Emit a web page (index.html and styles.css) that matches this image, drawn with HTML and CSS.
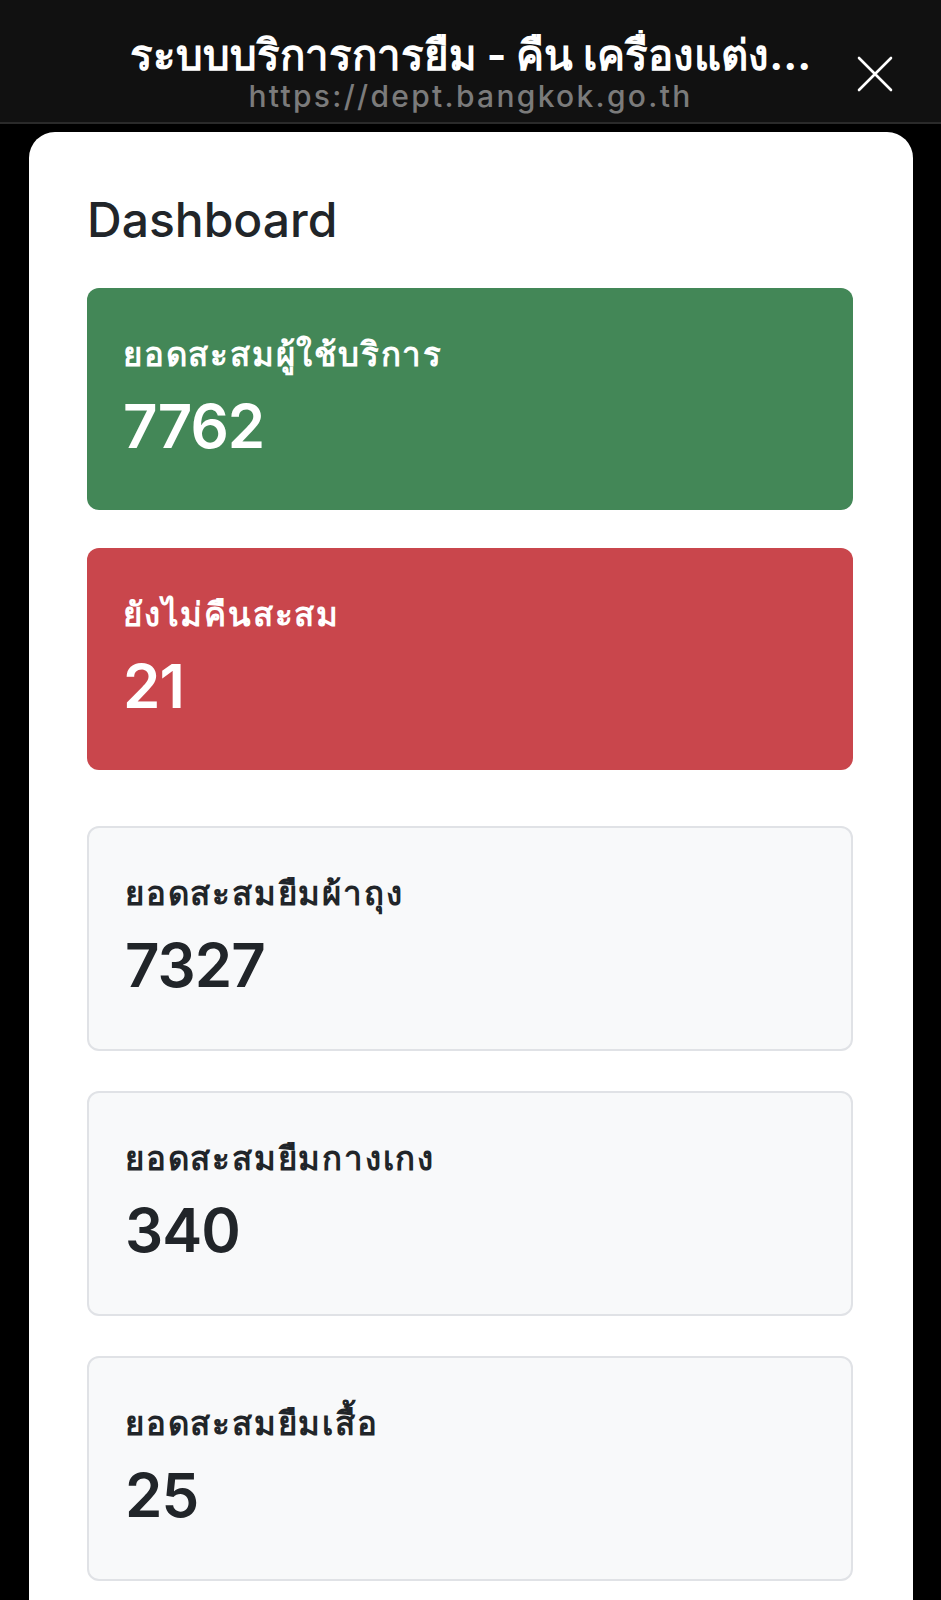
FILE: index.html
```html
<!DOCTYPE html>
<html lang="th">
<head>
<meta charset="utf-8">
<title>Dashboard</title>
<link rel="stylesheet" href="styles.css">
</head>
<body>
<header class="topbar">
  <div class="topbar-spacer"></div>
  <div class="topbar-titles">
    <div class="topbar-title">ระบบบริการการยืม - คืน เครื่องแต่ง...</div>
    <div class="topbar-url">https://dept.bangkok.go.th</div>
  </div>
  <div class="topbar-actions">
    <svg class="close-icon" viewBox="0 0 36 36" width="36" height="36" aria-label="ปิด">
      <path d="M2 2 L34 34 M34 2 L2 34" stroke="#ffffff" stroke-width="2.6" stroke-linecap="round" fill="none"/>
    </svg>
  </div>
</header>
<main class="sheet">
  <h2 class="page-title">Dashboard</h2>
  <div class="stat-group">
    <section class="stat-card stat-success">
      <h5 class="stat-label">ยอดสะสมผู้ใช้บริการ</h5>
      <div class="stat-value">7762</div>
    </section>
    <section class="stat-card stat-danger">
      <h5 class="stat-label">ยังไม่คืนสะสม</h5>
      <div class="stat-value">21</div>
    </section>
  </div>
  <div class="stat-group stat-group-light">
    <section class="stat-card stat-light">
      <h5 class="stat-label">ยอดสะสมยืมผ้าถุง</h5>
      <div class="stat-value">7327</div>
    </section>
    <section class="stat-card stat-light">
      <h5 class="stat-label">ยอดสะสมยืมกางเกง</h5>
      <div class="stat-value">340</div>
    </section>
    <section class="stat-card stat-light">
      <h5 class="stat-label">ยอดสะสมยืมเสื้อ</h5>
      <div class="stat-value">25</div>
    </section>
  </div>
</main>
</body>
</html>
```
FILE: styles.css
```css
* { box-sizing: border-box; }
html, body { margin: 0; padding: 0; }
body {
  background: #000000;
  font-family: Inter, "Noto Sans", sans-serif;
  color: #212529;
  width: 941px;
  min-height: 1600px;
  overflow: hidden;
}
.topbar {
  height: 124px;
  background: #111111;
  border-bottom: 2px solid #2a2a2a;
  display: grid;
  grid-template-columns: 1fr 720px 1fr;
  align-items: start;
}
.topbar-titles {
  padding-top: 30px;
  text-align: center;
  min-width: 0;
}
.topbar-title {
  color: #ffffff;
  font-size: 42px;
  font-weight: 700;
  line-height: 50px;
  white-space: nowrap;
  overflow: hidden;
}
.topbar-url {
  color: #7b7b7b;
  font-family: Inter, "Liberation Sans", sans-serif;
  font-size: 30px;
  font-weight: 500;
  letter-spacing: 2.3px;
  line-height: 34px;
  margin-top: -1px;
}
.topbar-actions {
  display: flex;
  justify-content: flex-end;
  padding: 56px 48px 0 0;
}
.close-icon { display: block; }
.sheet {
  margin: 8px 28px 0 29px;
  background: #ffffff;
  border-radius: 26px 26px 0 0;
  padding: 59px 60px 40px 58px;
  min-height: 1500px;
}
.page-title {
  margin: 0 0 39px 0;
  font-size: 48px;
  font-weight: 500;
  line-height: 58px;
  color: #212529;
}
.stat-group {
  display: flex;
  flex-direction: column;
  gap: 38px;
}
.stat-group-light {
  margin-top: 56px;
  gap: 40px;
}
.stat-card {
  border-radius: 12px;
  padding: 44px 36px 36px 36px;
  min-height: 222px;
}
.stat-success { background: #438757; color: #ffffff; }
.stat-danger { background: #c9464c; color: #ffffff; }
.stat-light {
  background: #f8f9fa;
  border: 2px solid #e0e2e6;
  color: #212529;
  padding: 43px 34px 34px 36px;
  min-height: 225px;
}
.stat-label {
  margin: 0 0 14px 0;
  font-size: 33px;
  font-weight: 600;
  letter-spacing: 1.8px;
  line-height: 44px;
}
.stat-value {
  font-size: 60px;
  font-weight: 600;
  letter-spacing: -1px;
  line-height: 72px;
}
```
